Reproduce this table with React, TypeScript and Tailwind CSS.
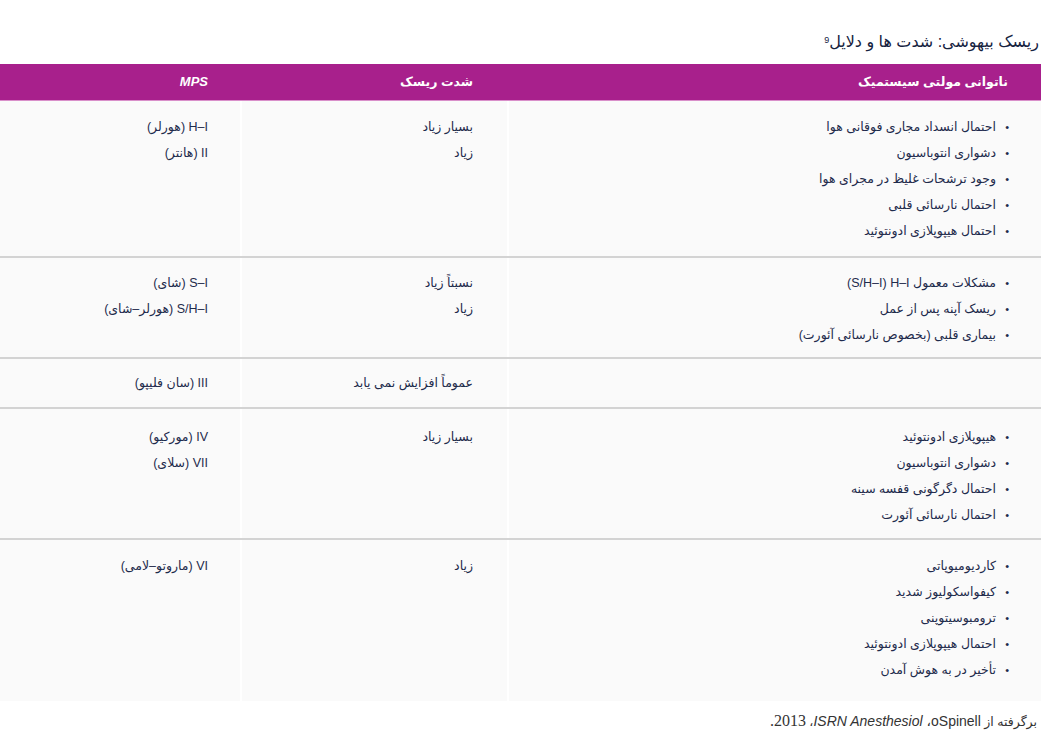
import React from "react";

type Row = {
  systemic: string[];
  severity: string[];
  mps: string[];
  pad: string;
};

const RLM = "\u200F";

const rows: Row[] = [
  {
    systemic: [
      "احتمال انسداد مجاری فوقانی هوا",
      "دشواری انتوباسیون",
      "وجود ترشحات غلیظ در مجرای هوا",
      "احتمال نارسائی قلبی",
      "احتمال هیپوپلازی ادونتوئید",
    ],
    severity: ["بسیار زیاد", "زیاد"],
    mps: ["H–I (هورلر)", "II (هانتر)"],
    pad: "pt-[13px] pb-[12px]",
  },
  {
    systemic: [
      `مشکلات معمول H–I${RLM} (S/H–I)`,
      "ریسک آپنه پس از عمل",
      "بیماری قلبی (بخصوص نارسائی آئورت)",
    ],
    severity: ["نسبتاً زیاد", "زیاد"],
    mps: ["S–I (شای)", "S/H–I (هورلر–شای)"],
    pad: "pt-[12px] pb-[9px]",
  },
  {
    systemic: [],
    severity: ["عموماً افزایش نمی یابد"],
    mps: ["III (سان فلیپو)"],
    pad: "pt-[11px] pb-[11px]",
  },
  {
    systemic: [
      "هیپوپلازی ادونتوئید",
      "دشواری انتوباسیون",
      "احتمال دگرگونی قفسه سینه",
      "احتمال نارسائی آئورت",
    ],
    severity: ["بسیار زیاد"],
    mps: ["IV (مورکیو)", "VII (سلای)"],
    pad: "pt-[15px] pb-[10px]",
  },
  {
    systemic: [
      "کاردیومیوپاتی",
      "کیفواسکولیوز شدید",
      "ترومبوسیتوپنی",
      "احتمال هیپوپلازی ادونتوئید",
      "تأخیر در به هوش آمدن",
    ],
    severity: ["زیاد"],
    mps: ["VI (ماروتو–لامی)"],
    pad: "pt-[13px] pb-[18px]",
  },
];

function Lines({ items }: { items: string[] }) {
  return (
    <div className="flex flex-col">
      {items.map((t, i) => (
        <div key={i} className="leading-[26px]">
          {t}
        </div>
      ))}
    </div>
  );
}

export default function App() {
  return (
    <div
      dir="rtl"
      className="w-[1041px] bg-white text-[12.5px] text-[#1e2b4c]"
      style={{ fontFamily: '"Liberation Sans", "DejaVu Sans", sans-serif' }}
    >
      {/* TITLE */}
      <div className="pr-[2px] pt-[31px] pb-[11px] text-[16px] leading-[22px] text-[#16233f]">
        ریسک بیهوشی: شدت ها و دلایل
        <sup className="text-[9px]">9</sup>
      </div>

      {/* HEADER */}
      <div className="grid grid-cols-[534px_267px_1fr] bg-[#a8208c] border-b border-[#d98fca] text-[12.5px] font-bold text-white">
        <div className="pr-[33px] leading-[36px]">ناتوانی مولتی سیستمیک</div>
        <div className="pr-[34px] leading-[36px]">شدت ریسک</div>
        <div className="pr-[32px] leading-[36px] italic text-[13px]">MPS</div>
      </div>

      {/* ROWS */}
      {rows.map((r, i) => (
        <div
          key={i}
          className={`grid grid-cols-[532px_265px_1fr] gap-x-[2px] bg-white ${
            i > 0 ? "border-t-2 border-[#d3d3d3]" : ""
          }`}
        >
          <div className={`bg-[#fafafa] pr-[32px] ${r.pad}`}>
            {r.systemic.map((t, j) => (
              <div key={j} className="flex items-center leading-[26px]">
                <span className="w-[13px] shrink-0 text-[11px]">•</span>
                <span>{t}</span>
              </div>
            ))}
          </div>
          <div className={`bg-[#fafafa] pr-[34px] ${r.pad}`}>
            <Lines items={r.severity} />
          </div>
          <div className={`bg-[#fafafa] pr-[32px] ${r.pad}`}>
            <Lines items={r.mps} />
          </div>
        </div>
      ))}

      {/* SOURCE */}
      <div className="pr-[4px] pt-[9px] text-[12.5px] leading-[22px] text-[#333333]">
        {"برگرفته از "}
        <span className="text-[14px]">{`oSpinell${RLM}، `}</span>
        <i className="text-[14px]">ISRN Anesthesiol</i>
        {`${RLM}، `}
        <span
          style={{ fontFamily: '"Liberation Serif", serif' }}
          className="text-[16px]"
        >
          2013.
        </span>
      </div>
    </div>
  );
}
